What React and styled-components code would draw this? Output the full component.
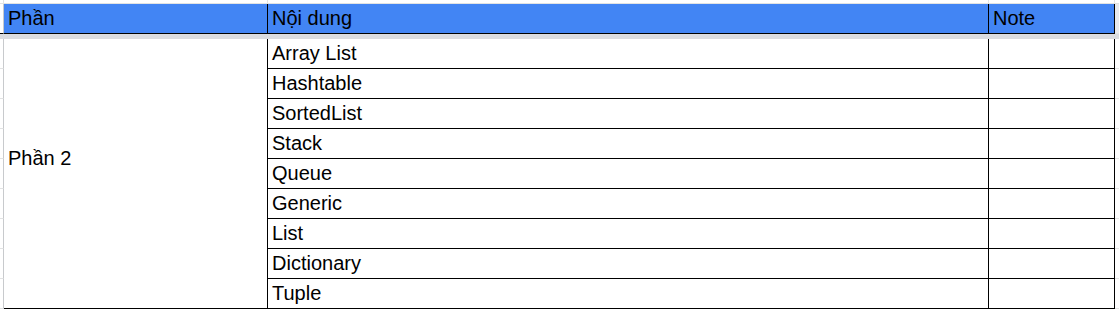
import React from "react";
import styled, { createGlobalStyle } from "styled-components";

const GlobalStyle = createGlobalStyle`
  html, body { margin: 0; padding: 0; background: #ffffff; }
  body { font-family: "Liberation Sans", Arial, sans-serif; }
`;

const GRID = "#e2e3e3";
const LINE = "#000000";

const Sheet = styled.div`
  display: grid;
  grid-template-columns: 4px 264px 721px 126px 4px;
  grid-template-rows: 4px 30px 5px repeat(9, 30px);
  width: 1119px;
  height: 309px;
  overflow: hidden;
  font-family: "Liberation Sans", Arial, sans-serif;
  font-size: 20px;
  color: #000;
`;

const TopCell = styled.div`
  box-sizing: border-box;
  border-bottom: 1px solid ${GRID};
  border-right: ${(p) => (p.$last ? "none" : `1px solid ${GRID}`)};
`;

const Gutter = styled.div`
  box-sizing: border-box;
  background: ${(p) => (p.$shade ? "#e8eaed" : "#ffffff")};
  border-right: ${(p) => (p.$right ? "none" : `1px solid #c8cacd`)};
  border-bottom: 1px solid ${(p) => (p.$dark ? LINE : GRID)};
`;

const HeaderCell = styled.div`
  box-sizing: border-box;
  background: #4285f4;
  border-right: 1px solid ${LINE};
  border-bottom: 1px solid ${LINE};
  padding: 3px 4px 0;
  line-height: 23px;
  white-space: nowrap;
  overflow: hidden;
`;

const Band = styled.div`
  grid-column: 1 / -1;
  background: #dadce0;
`;

const MergedCell = styled.div`
  box-sizing: border-box;
  grid-row: span 9;
  border-right: 1px solid ${LINE};
  border-bottom: 1px solid ${LINE};
  padding: ${(p) => p.$offset}px 4px 0;
  line-height: 23px;
  white-space: nowrap;
`;

const Cell = styled.div`
  box-sizing: border-box;
  border-right: 1px solid ${LINE};
  border-bottom: 1px solid ${LINE};
  padding: 3px 4px 0;
  line-height: 23px;
  white-space: nowrap;
  overflow: hidden;
`;

const items = [
  "Array List",
  "Hashtable",
  "SortedList",
  "Stack",
  "Queue",
  "Generic",
  "List",
  "Dictionary",
  "Tuple",
];

export default function App() {
  return (
    <>
      <GlobalStyle />
      <Sheet>
        <TopCell />
        <TopCell />
        <TopCell />
        <TopCell />
        <TopCell $last />

        <Gutter $dark />
        <HeaderCell>Phần</HeaderCell>
        <HeaderCell>Nội dung</HeaderCell>
        <HeaderCell>Note</HeaderCell>
        <Gutter $right $shade />

        <Band />

        {items.map((item, i) => (
          <React.Fragment key={item}>
            <Gutter />
            {i === 0 && <MergedCell $offset={108}>Phần 2</MergedCell>}
            <Cell>{item}</Cell>
            <Cell />
            <Gutter $right />
          </React.Fragment>
        ))}
      </Sheet>
    </>
  );
}
